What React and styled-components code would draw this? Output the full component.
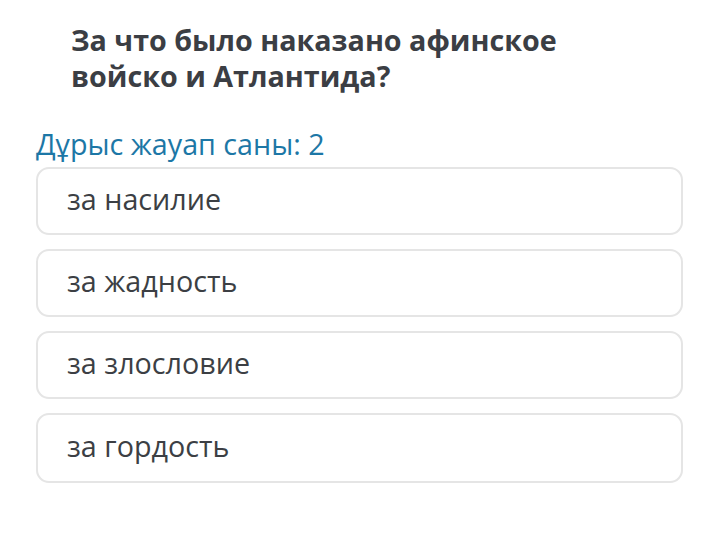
import styled, { createGlobalStyle } from 'styled-components'

const GlobalStyle = createGlobalStyle`
    body {
        margin: 0;
        background: #fff;
        font-family: "Open Sans", sans-serif;
    }
`

const Page = styled.div`
    width: 720px;
    height: 535px;
    padding: 22px 37px 0 36px;
    box-sizing: border-box;
`

const Question = styled.h1`
    margin: 0 0 0 35px;
    font-size: 28.7px;
    line-height: 36px;
    font-weight: 700;
    color: #3b3e44;
    width: 540px;
`

const Counter = styled.div`
    margin-top: 32px;
    font-size: 28.7px;
    line-height: 36px;
    color: #1d77a6;
`

const Options = styled.div`
    display: flex;
    flex-direction: column;
    gap: 14px;
    margin-top: 5px;
`

const Option = styled.div`
    height: ${p => (p.last ? 70 : 68)}px;
    box-sizing: border-box;
    border: 2px solid #e5e5e5;
    border-radius: 13px;
    padding: 0 29px 5px;
    display: flex;
    align-items: center;
    font-size: 28.7px;
    color: #3c3f44;
`

const answers = ['за насилие', 'за жадность', 'за злословие', 'за гордость']

function App() {
    return (
        <Page>
            <GlobalStyle />
            <Question>За что было наказано афинское войско и Атлантида?</Question>
            <Counter>Дұрыс жауап саны: 2</Counter>
            <Options>
                {answers.map((a, i) => (
                    <Option key={a} last={i === answers.length - 1}>{a}</Option>
                ))}
            </Options>
        </Page>
    )
}

export default App
